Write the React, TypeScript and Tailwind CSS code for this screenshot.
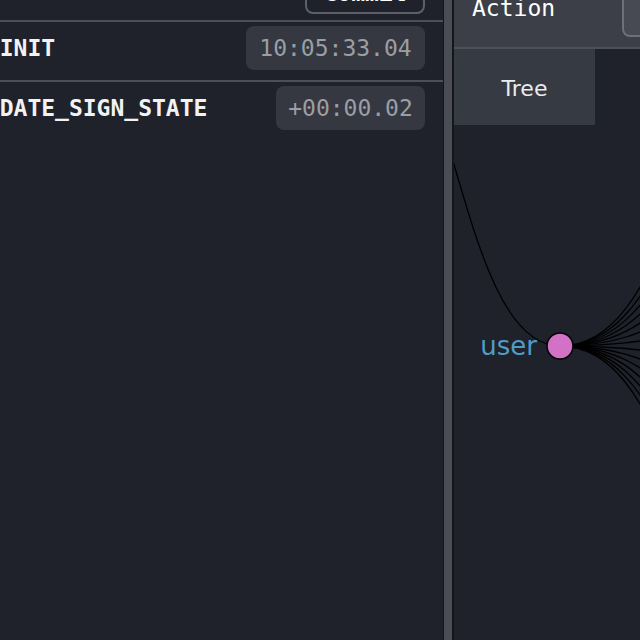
import React from 'react';

const mono = { fontFamily: '"DejaVu Sans Mono", "Liberation Mono", monospace' };
const sans = { fontFamily: '"DejaVu Sans", "Noto Sans", sans-serif' };

// node sits at (106, 297) inside the tree canvas
const NODE = { x: 106, y: 297 };
const children = Array.from({ length: 14 }, (_, i) => 61 + i * 36);

const diagonal = (sx: number, sy: number, tx: number, ty: number) => {
  const mx = (sx + tx) / 2;
  return `M${sx},${sy} C${mx},${sy} ${mx},${ty} ${tx},${ty}`;
};

const ActionRow = ({ name, time, badgeWidth }: { name: string; time: string; badgeWidth: string }) => (
  <div className="flex h-[58px] items-start pr-[18px] pt-[4px]">
    <div className="flex h-[44px] flex-1 items-center justify-between">
      <span className="ml-[-28px] text-[23px] font-bold text-[#f2f2f2]" style={mono}>
        {name}
      </span>
      <span
        className={`flex h-[44px] ${badgeWidth} items-center justify-center rounded-[8px] bg-[#353841] text-[23px] text-[#9b9ea4]`}
        style={mono}
      >
        {time}
      </span>
    </div>
  </div>
);

const App: React.FC = () => {
  return (
    <div className="flex h-[640px] w-[640px] overflow-hidden bg-[#1f222a]">
      {/* action list */}
      <div className="flex w-[443px] shrink-0 flex-col">
        <div className="flex h-[20px] items-end justify-between overflow-hidden pr-[18px]">
          <span className="mb-[16px] ml-[2px] text-[23px] leading-[23px] text-[#8e9198]" style={mono}>
            filter...
          </span>
          <div className="mb-[6px] flex h-[40px] w-[120px] items-end justify-center rounded-[8px] border-2 border-[#5c6068] bg-[#1f222a]">
            <span className="mb-[7px] text-[23px] font-bold leading-[23px] text-white" style={mono}>
              Commit
            </span>
          </div>
        </div>
        <div className="h-[2px] bg-[#4b4f57]" />
        <ActionRow name="@@INIT" time="10:05:33.04" badgeWidth="w-[179px]" />
        <div className="h-[2px] bg-[#4b4f57]" />
        <ActionRow name="UPDATE_SIGN_STATE" time="+00:00.02" badgeWidth="w-[149px]" />
      </div>

      {/* splitter */}
      <div className="flex w-[11px] shrink-0">
        <div className="w-[1px] bg-[#14161b]" />
        <div className="w-[8px] bg-[#4a4d55]" />
        <div className="w-[2px] bg-[#14161b]" />
      </div>

      {/* monitor */}
      <div className="flex flex-1 flex-col overflow-hidden">
        <div className="flex h-[47px] shrink-0 items-start justify-between bg-[#3c3f47]">
          <span className="ml-[18px] mt-[-3px] text-[23px] leading-[23px] text-white" style={mono}>
            Action
          </span>
          <div className="mr-[-62px] h-[37px] w-[80px] rounded-bl-[8px] rounded-br-[8px] border-2 border-t-0 border-[#6c7078] bg-[#474a52]" />
        </div>
        <div className="h-[2px] shrink-0 bg-[#4d5058]" />
        <div className="relative flex-1">
          <svg className="absolute inset-0" width="186" height="591">
            <path d={diagonal(-108, -73, NODE.x, NODE.y)} fill="none" stroke="#000" strokeWidth="1.3" />
            {children.map((cy) => (
              <path key={cy} d={diagonal(NODE.x, NODE.y, 326, cy)} fill="none" stroke="#000" strokeWidth="1.3" />
            ))}
            <circle cx={NODE.x} cy={NODE.y} r="13" fill="#d272c6" stroke="#000" strokeWidth="1.5" />
            <text x="83" y="306" textAnchor="end" fill="#4f9dc6" fontSize="26" style={sans}>
              user
            </text>
          </svg>
          <div className="relative flex h-[76px] w-[141px] items-center justify-center bg-[#363a43] pt-[2px]">
            <span className="text-[22px] text-[#ececec]" style={sans}>
              Tree
            </span>
          </div>
        </div>
      </div>
    </div>
  );
};

export default App;
